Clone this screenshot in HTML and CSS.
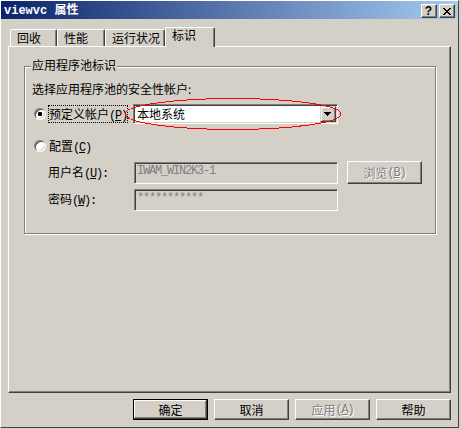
FILE: index.html
```html
<!DOCTYPE html>
<html>
<head>
<meta charset="utf-8">
<link rel="stylesheet" href="styles.css">
</head>
<body>
<div class="window">
  <div class="titlebar">
    <span class="title"><span class="t-latin">viewvc</span> 属性</span>
    <div class="caption-btns">
      <div class="cap-btn help">?</div>
      <div class="cap-btn close">
        <svg width="8" height="7" viewBox="0 0 8 7" shape-rendering="crispEdges"><path fill="#000" d="M0 0h2v1H0z M6 0h2v1H6z M1 1h2v1H1z M5 1h2v1H5z M2 2h4v1H2z M3 3h2v1H3z M2 4h4v1H2z M1 5h2v1H1z M5 5h2v1H5z M0 6h2v1H0z M6 6h2v1H6z"/></svg>
      </div>
    </div>
  </div>

  <div class="tabs">
    <div class="tab tab-w1">回收</div>
    <div class="tab tab-w2">性能</div>
    <div class="tab tab-w3">运行状况</div>
    <div class="tab tab-active">标识</div>
  </div>

  <div class="panel">
    <div class="group">
      <div class="legend">应用程序池标识</div>
      <div class="desc">选择应用程序池的安全性帐户:</div>
      <div class="row row-radio1">
        <span class="radio checked"></span>
        <span class="rlabel focus">预定义帐户<span class="mn">(<u>P</u>)</span></span>
        <div class="combo">
          <span class="combo-text">本地系统</span>
          <span class="combo-btn">
            <svg width="7" height="4" viewBox="0 0 7 4" shape-rendering="crispEdges"><path fill="#000" d="M0 0h7v1H0z M1 1h5v1H1z M2 2h3v1H2z M3 3h1v1H3z"/></svg>
          </span>
        </div>
      </div>
      <div class="row row-radio2">
        <span class="radio"></span>
        <span class="rlabel">配置<span class="mn">(<u>C</u>)</span></span>
      </div>
      <div class="row row-field row-user">
        <span class="flabel">用户名<span class="mn">(<u>U</u>):</span></span>
        <div class="textbox">IWAM_WIN2K3-1</div>
        <div class="btn disabled browse">浏览<span class="mn">(<u>B</u>)</span></div>
      </div>
      <div class="row row-field row-pass">
        <span class="flabel">密码<span class="mn">(<u>W</u>):</span></span>
        <div class="textbox">***********</div>
      </div>
    </div>
  </div>

  <div class="buttons">
    <div class="btn default">确定</div>
    <div class="btn">取消</div>
    <div class="btn disabled">应用<span class="mn">(<u>A</u>)</span></div>
    <div class="btn">帮助</div>
  </div>

  <svg class="annot" width="220" height="36" viewBox="0 0 220 36" shape-rendering="crispEdges"><ellipse cx="109" cy="17" rx="108" ry="15.5" fill="none" stroke="#ff0000" stroke-width="1"/></svg>
</div>
</body>
</html>
```

FILE: styles.css
```css
* {
  box-sizing: border-box;
  margin: 0;
  padding: 0;
}

body {
  background: #d4d0c8;
  font-family: "Noto Sans CJK SC", sans-serif;
  font-size: 12px;
  color: #000;
  width: 461px;
  height: 429px;
  overflow: hidden;
}

.window {
  position: relative;
  width: 459px;
  height: 428px;
  background: #d4d0c8;
  border-top: 1px solid #ffffff;
  border-left: 1px solid #ffffff;
  border-right: 1px solid #404040;
  border-bottom: 1px solid #404040;
  display: flex;
  flex-direction: column;
}

/* title bar */
.titlebar {
  height: 18px;
  margin-right: 1px;
  background: linear-gradient(to right, #0a246a, #a6caf0);
  display: flex;
  padding-left: 3px;
}

.title {
  color: #fff;
  font-weight: bold;
  font-family: "Liberation Mono", "Noto Sans CJK SC", monospace;
  font-size: 12px;
  line-height: 18px;
  padding-top: 1px;
  white-space: pre;
}

.caption-btns {
  margin-left: auto;
  margin-right: 2px;
  margin-top: 3px;
  display: flex;
  gap: 2px;
}

.cap-btn {
  width: 16px;
  height: 14px;
  background: #d4d0c8;
  border: 1px solid;
  border-color: #ffffff #404040 #404040 #ffffff;
  box-shadow: inset -1px -1px 0 #808080;
  display: flex;
  align-items: center;
  justify-content: center;
}

.cap-btn.help {
  font-family: "Liberation Sans", sans-serif;
  font-weight: bold;
  font-size: 12px;
  line-height: 12px;
  padding-right: 1px;
}

.cap-btn.close svg {
  display: block;
  margin-right: 1px;
}

/* tabs */
.tabs {
  height: 27px;
  padding-left: 9px;
  display: flex;
  align-items: flex-end;
}

.tab {
  height: 17px;
  border-top: 1px solid #ffffff;
  border-left: 1px solid #ffffff;
  border-right: 1px solid #404040;
  box-shadow: inset -1px 0 0 #808080;
  border-radius: 2px 2px 0 0;
  padding-left: 6px;
  padding-top: 1px;
  line-height: 14px;
  white-space: nowrap;
}

.tab-w1 { width: 47px; }
.tab-w2 { width: 48px; }
.tab-w3 { width: 60px; }

.tab-active {
  width: 50px;
  height: 20px;
  margin-bottom: -1px;
  padding-top: 0;
  position: relative;
  z-index: 1;
  background: #d4d0c8;
}

/* panel */
.panel {
  margin-left: 7px;
  width: 443px;
  height: 347px;
  border-top: 1px solid #ffffff;
  border-left: 1px solid #ffffff;
  border-right: 1px solid #404040;
  border-bottom: 1px solid #404040;
  box-shadow: inset -1px -1px 0 #808080;
  padding-left: 15px;
  padding-top: 19px;
}

.group {
  width: 412px;
  border: 1px solid #808080;
  box-shadow: 1px 1px 0 #ffffff, inset 1px 1px 0 #ffffff;
  display: flex;
  flex-direction: column;
  align-items: flex-start;
  padding-bottom: 22px;
}

.legend {
  margin-top: -9px;
  margin-left: 6px;
  padding: 0 1px;
  background: #d4d0c8;
  line-height: 14px;
  height: 14px;
}

.desc {
  margin-top: 10px;
  margin-left: 7px;
  line-height: 14px;
  height: 14px;
}

.row {
  display: flex;
  align-items: center;
  width: 100%;
}

.row-radio1 {
  margin-top: 8px;
  height: 20px;
  padding-left: 9px;
}

.row-radio2 {
  margin-top: 12px;
  height: 20px;
  padding-left: 9px;
}

.row-field {
  height: 22px;
  padding-left: 23px;
  align-items: flex-start;
}

.row-user { margin-top: 6px; }
.row-pass { margin-top: 5px; }

.radio {
  width: 12px;
  height: 12px;
  border-radius: 50%;
  border: 1px solid;
  border-color: #808080 #ffffff #ffffff #808080;
  box-shadow: inset 1px 1px 0 #404040, inset -1px -1px 0 #d4d0c8;
  background: #ffffff;
  display: flex;
  align-items: center;
  justify-content: center;
  flex: none;
}

.radio.checked::after {
  content: "";
  width: 4px;
  height: 4px;
  border-radius: 1px;
  background: #000;
}

.rlabel {
  margin-left: 3px;
  width: 78px;
  height: 16px;
  line-height: 16px;
  white-space: nowrap;
}

.rlabel.focus {
  outline: 1px dotted #000;
}

.mn {
  font-family: "Liberation Mono", monospace;
  font-size: 12px;
  letter-spacing: -1.2px;
}

.combo {
  margin-left: 6px;
  width: 205px;
  height: 20px;
  background: #ffffff;
  border: 1px solid;
  border-color: #808080 #ffffff #ffffff #808080;
  box-shadow: inset 1px 1px 0 #404040, inset -1px -1px 0 #d4d0c8;
  padding: 1px;
  display: flex;
  align-items: center;
}

.combo-text {
  padding-left: 2px;
  line-height: 14px;
}

.combo-btn {
  margin-left: auto;
  width: 16px;
  height: 16px;
  background: #d4d0c8;
  border: 1px solid;
  border-color: #d4d0c8 #404040 #404040 #d4d0c8;
  box-shadow: inset 1px 1px 0 #ffffff, inset -1px -1px 0 #808080;
  display: flex;
  align-items: center;
  justify-content: center;
}

.combo-btn svg {
  display: block;
  margin-left: -1px;
}

.flabel {
  width: 86px;
  line-height: 14px;
  padding-top: 3px;
  white-space: nowrap;
}

.textbox {
  width: 204px;
  height: 22px;
  background: #d4d0c8;
  color: #808080;
  border: 1px solid;
  border-color: #808080 #ffffff #ffffff #808080;
  box-shadow: inset 1px 1px 0 #404040, inset -1px -1px 0 #d4d0c8;
  padding: 1px 2px;
  font-family: "Liberation Mono", monospace;
  font-size: 12px;
  letter-spacing: -1.2px;
  line-height: 14px;
  white-space: nowrap;
}

/* buttons */
.btn {
  width: 75px;
  height: 21px;
  background: #d4d0c8;
  border: 1px solid;
  border-color: #ffffff #404040 #404040 #ffffff;
  box-shadow: inset -1px -1px 0 #808080;
  display: flex;
  align-items: center;
  justify-content: center;
  line-height: 14px;
  white-space: nowrap;
}

.btn.default {
  border-color: #000;
  box-shadow: inset -1px -1px 0 #404040, inset 1px 1px 0 #ffffff, inset -2px -2px 0 #808080;
}

.btn.disabled {
  color: #808080;
  text-shadow: 1px 1px 0 #ffffff;
}

.browse {
  margin-left: 9px;
  margin-top: -1px;
  height: 23px;
}

.buttons {
  margin-top: 6px;
  display: flex;
  justify-content: flex-end;
  gap: 6px;
  padding-right: 7px;
}

.annot {
  position: absolute;
  left: 123px;
  top: 96px;
  pointer-events: none;
}
```
